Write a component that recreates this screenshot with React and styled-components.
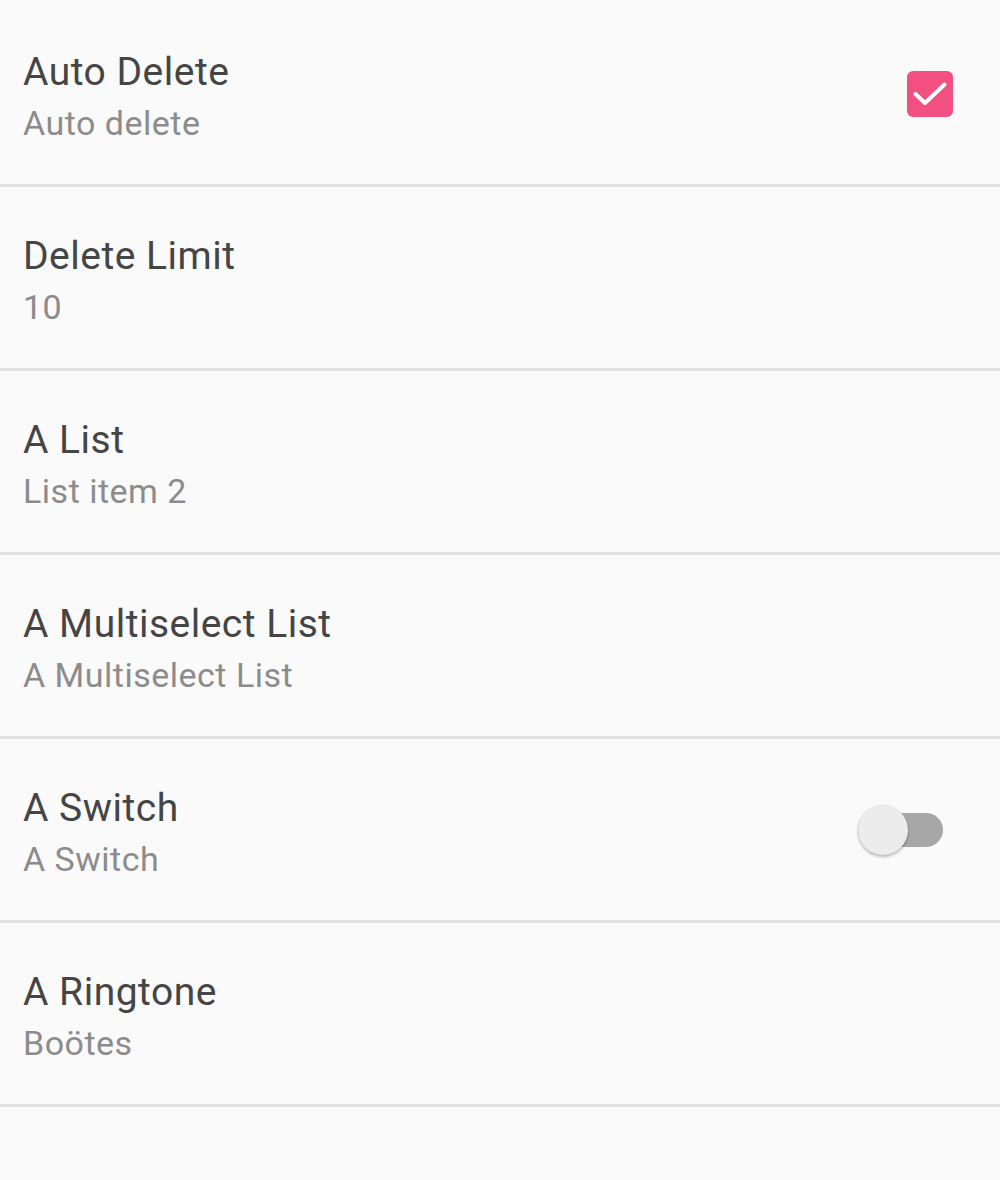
import React from 'react';
import styled, { createGlobalStyle } from 'styled-components';

const GlobalStyle = createGlobalStyle`
  body {
    margin: 0;
    background-color: #fafafa;
    font-family: Roboto, "Liberation Sans", sans-serif;
  }
`;

/*  SCREEN  */
const Screen = styled.div`
  width: 1000px;
  min-height: 1180px;
  padding-top: 3px;
  box-sizing: border-box;
  background-color: #fafafa;
`;

/*  PREFERENCE ROWS  */
const Row = styled.div`
  height: 184px;
  box-sizing: border-box;
  border-bottom: 3px solid #e2e2e2;
  display: flex;
  flex-direction: row;
  align-items: center;
  justify-content: space-between;
  padding: 0 ${props => props.$rightPad || 47}px 0 23px;
`;

const TextBlock = styled.div`
  display: flex;
  flex-direction: column;
  align-self: flex-start;
  padding-top: 44px;
`;

const Title = styled.div`
  font-size: 39px;
  line-height: 50px;
  letter-spacing: 0.5px;
  color: #454545;
`;

const Summary = styled.div`
  margin-top: 1px;
  font-size: 34px;
  line-height: 50px;
  letter-spacing: 0.5px;
  color: #8c8c8c;
`;

/*  WIDGETS  */
const CheckBox = styled.div`
  width: 46px;
  height: 46px;
  border-radius: 6px;
  background-color: #f25083;
  display: flex;
  align-items: center;
  justify-content: center;
`;

const SwitchTrack = styled.div`
  position: relative;
  width: 85px;
  height: 34px;
  border-radius: 17px;
  background-color: #a7a7a7;
`;

const SwitchThumb = styled.div`
  position: absolute;
  left: 0;
  top: -8px;
  width: 50px;
  height: 50px;
  border-radius: 50%;
  background-color: #ececec;
  box-shadow: 0 2px 3px rgba(0, 0, 0, 0.25), 0 0 1px rgba(0, 0, 0, 0.15);
`;

const prefs = [
  { title: 'Auto Delete', summary: 'Auto delete', widget: 'check' },
  { title: 'Delete Limit', summary: '10' },
  { title: 'A List', summary: 'List item 2' },
  { title: 'A Multiselect List', summary: 'A Multiselect List' },
  { title: 'A Switch', summary: 'A Switch', widget: 'switch' },
  { title: 'A Ringtone', summary: 'Boötes' },
];

export default function App() {
  const renderWidget = (widget) => {
    if (widget === 'check') {
      return (
        <CheckBox>
          <svg width="46" height="46" viewBox="0 0 46 46">
            <path d="M8.5 23l9.5 9L37.5 13.5" fill="none" stroke="#fff" strokeWidth="4" strokeLinecap="round" strokeLinejoin="round" />
          </svg>
        </CheckBox>
      );
    }
    if (widget === 'switch') {
      return (
        <SwitchTrack>
          <SwitchThumb />
        </SwitchTrack>
      );
    }
    return null;
  };

  return (
    <Screen>
      <GlobalStyle />
      {prefs.map((pref, index) =>
        <Row key={'pref' + index} $rightPad={pref.widget === 'switch' ? 57 : 47}>
          <TextBlock>
            <Title>{pref.title}</Title>
            <Summary>{pref.summary}</Summary>
          </TextBlock>
          {renderWidget(pref.widget)}
        </Row>
      )}
    </Screen>
  );
}
